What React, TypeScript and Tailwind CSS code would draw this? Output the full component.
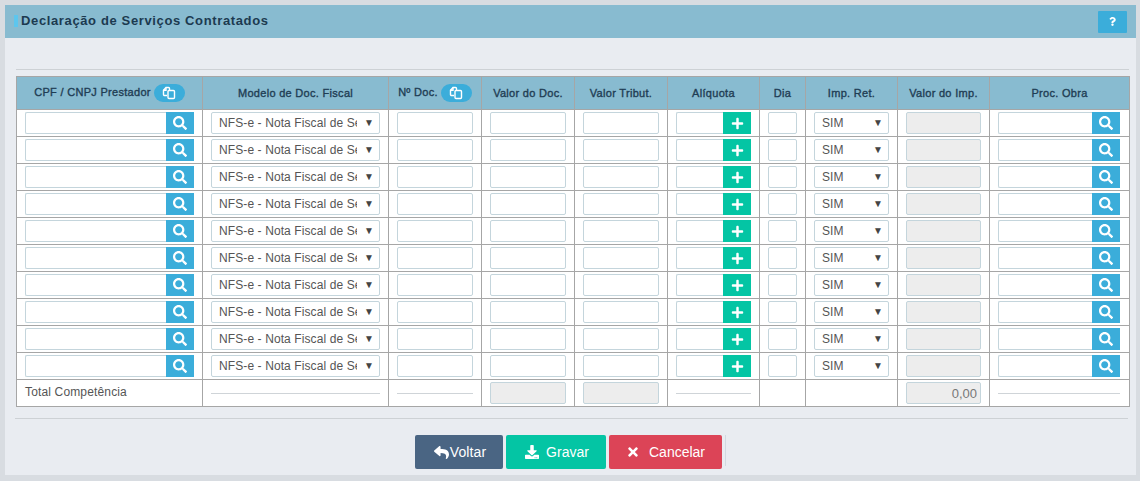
import { FaDownload, FaPlus, FaQuestion, FaReply, FaSearch, FaTimes } from 'react-icons/fa';

const rows = Array.from({ length: 10 }, (_, i) => i);

const inputClass = 'h-[22px] w-full rounded-[2px] border border-[#c4d5dc] bg-white block';
const disabledClass = 'h-[22px] w-full rounded-[2px] border border-[#c4d5dc] bg-[#ededed] block';
const headClass = 'border border-[#a6a6a6] text-center font-normal text-[11px] tracking-[0.3px] text-[#1f3d54] [-webkit-text-stroke:0.35px_#1f3d54] align-middle';
const cellClass = 'border border-[#a6a6a6] px-2 align-middle';

const SearchInput = () => (
  <div className="flex h-[22px]">
    <input className="h-[22px] min-w-0 flex-1 rounded-l-[2px] border border-r-0 border-[#c4d5dc] bg-white" />
    <button className="flex h-[22px] w-[28px] shrink-0 items-center justify-center bg-[#3badda] text-white">
      <FaSearch size={14} />
    </button>
  </div>
);

const Select = ({ label }: { label: string }) => (
  <div className="relative h-[22px]">
    <select className="block h-[22px] w-full appearance-none rounded-[2px] border border-[#c4d5dc] bg-white pb-[1px] pl-[7px] pr-[22px] text-[12px] tracking-[0.1px] text-[#555]">
      <option>{label}</option>
    </select>
    <span className="absolute right-[6px] top-[5px] text-[10px] leading-3 text-[#444]">▼</span>
  </div>
);

const Rule = () => <div className="h-px w-full bg-[#cfd4d8]" />;

const CopyIcon = () => (
  <svg width="14" height="14" viewBox="0 0 14 14" fill="none" stroke="currentColor" strokeWidth="1.4">
    <path d="M5 9.5H2.5a1 1 0 0 1-1-1V4.2L4 1.5h2.5a1 1 0 0 1 1 1V4" />
    <path d="M1.5 4.2H4V1.5" />
    <rect x="6" y="4.5" width="6.5" height="8" rx="1" />
  </svg>
);

const CopyPill = () => (
  <span className="ml-[3px] inline-flex h-[18px] w-[31px] items-center justify-center rounded-full bg-[#3badda] align-middle text-white [-webkit-text-stroke:0]">
    <CopyIcon />
  </span>
);

export default function App() {
  return (
    <div className="h-[481px] w-[1140px] overflow-hidden bg-[#d8dce1] p-[5px] pr-[4px] font-['Liberation_Sans',Arial,sans-serif]">
      <div className="h-[470px] w-[1131px] bg-[#e9ecf1]">
        <div className="flex h-[33px] items-center justify-between bg-[#88bbd0] pl-[9px] pr-[9px]">
          <div className="flex items-center pb-[2px]">
            <span className="h-[12px] w-[4px] bg-[#5cc6ee]" />
            <h1 className="ml-[3px] text-[13px] font-bold tracking-[0.63px] text-[#1c3a50]">Declaração de Serviços Contratados</h1>
          </div>
          <button className="flex h-[22px] w-[29px] items-center justify-center rounded-[1px] bg-[#3badda] text-white">
            <FaQuestion size={9} />
          </button>
        </div>

        <div className="pl-[11px]">
          <div className="mt-[31px] h-px w-[1113px] bg-[#cdd1d5]" />
          <table className="mt-[6px] w-[1113px] table-fixed border-collapse bg-white">
            <colgroup>
              <col className="w-[186px]" />
              <col className="w-[186px]" />
              <col className="w-[93px]" />
              <col className="w-[93px]" />
              <col className="w-[93px]" />
              <col className="w-[92px]" />
              <col className="w-[46px]" />
              <col className="w-[92px]" />
              <col className="w-[92px]" />
              <col className="w-[140px]" />
            </colgroup>
            <thead>
              <tr className="h-[33px] bg-[#88bbd0]">
                <th className={headClass}>CPF / CNPJ Prestador<CopyPill /></th>
                <th className={headClass}>Modelo de Doc. Fiscal</th>
                <th className={headClass}>Nº Doc.<CopyPill /></th>
                <th className={headClass}>Valor do Doc.</th>
                <th className={headClass}>Valor Tribut.</th>
                <th className={headClass}>Alíquota</th>
                <th className={headClass}>Dia</th>
                <th className={headClass}>Imp. Ret.</th>
                <th className={headClass}>Valor do Imp.</th>
                <th className={headClass}>Proc. Obra</th>
              </tr>
            </thead>
            <tbody>
              {rows.map((i) => (
                <tr key={i} className="h-[27px]">
                  <td className={cellClass}><SearchInput /></td>
                  <td className={cellClass}><Select label="NFS-e - Nota Fiscal de Serviços" /></td>
                  <td className={cellClass}><input className={inputClass} /></td>
                  <td className={cellClass}><input className={inputClass} /></td>
                  <td className={cellClass}><input className={inputClass} /></td>
                  <td className={cellClass}>
                    <div className="flex h-[22px]">
                      <input className="h-[22px] min-w-0 flex-1 rounded-l-[2px] border border-r-0 border-[#c4d5dc] bg-white" />
                      <button className="flex h-[22px] w-[28px] shrink-0 items-center justify-center bg-[#04c5a4] text-white">
                        <FaPlus size={13} />
                      </button>
                    </div>
                  </td>
                  <td className={cellClass}><input className={inputClass} /></td>
                  <td className={cellClass}><Select label="SIM" /></td>
                  <td className={cellClass}><input disabled className={disabledClass} /></td>
                  <td className={`${cellClass} pr-[9px]`}><SearchInput /></td>
                </tr>
              ))}
              <tr className="h-[27px]">
                <td className={`${cellClass} pb-[2px] text-[12px] tracking-[0.15px] text-[#555]`}>Total Competência</td>
                <td className={cellClass}><Rule /></td>
                <td className={cellClass}><Rule /></td>
                <td className={cellClass}><input disabled className={disabledClass} /></td>
                <td className={cellClass}><input disabled className={disabledClass} /></td>
                <td className={cellClass}><Rule /></td>
                <td className={cellClass} />
                <td className={cellClass} />
                <td className={cellClass}>
                  <input disabled value="0,00" className={`${disabledClass} pr-[3px] text-right text-[13px] text-[#777]`} />
                </td>
                <td className={`${cellClass} pr-[9px]`}><Rule /></td>
              </tr>
            </tbody>
          </table>
          <div className="-ml-px mt-[11px] h-px w-[1113px] bg-[#cdd1d5]" />
          <div className="mt-[16px] flex h-[34px] justify-center">
            <div className="-ml-[11px] flex gap-[3px]">
              <button className="flex h-[34px] w-[88px] items-center justify-center gap-[1px] rounded-[2px] bg-[#4a6583] pl-[2px] text-[14px] tracking-[0.1px] text-white">
                <FaReply size={15} />
                <span>Voltar</span>
              </button>
              <button className="flex h-[34px] w-[100px] items-center justify-center gap-[7px] rounded-[2px] bg-[#04c5a4] pl-[2px] text-[14px] text-white">
                <FaDownload size={14} />
                <span>Gravar</span>
              </button>
              <button className="flex h-[34px] w-[113px] items-center justify-center gap-[9px] rounded-[2px] bg-[#dc4457] text-[14px] text-white">
                <FaTimes size={14} />
                <span>Cancelar</span>
              </button>
              <span className="h-[31px] w-px bg-[#d2d9e0]" />
            </div>
          </div>
        </div>
      </div>
    </div>
  );
}
